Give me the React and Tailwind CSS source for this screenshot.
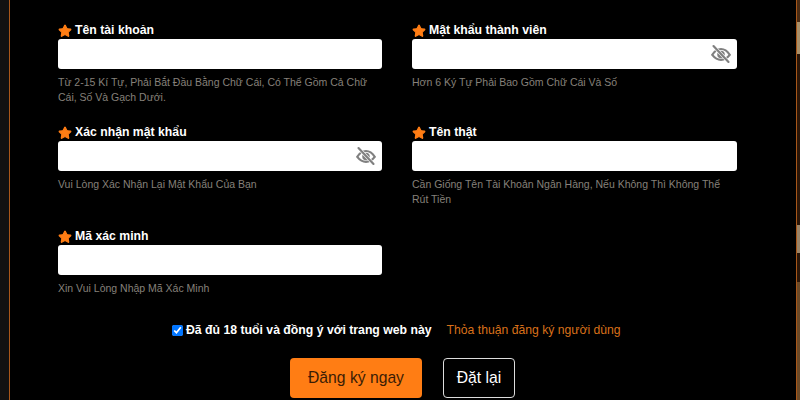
import { Star } from 'lucide-react';

function EyeOff() {
  return (
    <svg viewBox="0 0 24 24" className="w-[20px] h-[20px] text-[#808080]" fill="none" stroke="currentColor">
      <path d="M1.500 13C5 7.500 8.500 6 12 6s7 1.500 10.500 7c-3.500 4.500-7 6-10.500 6s-7-1.500-10.500-6z" strokeWidth="2.600" />
      <circle cx="12" cy="12.500" r="4.500" fill="currentColor" stroke="none" />
      <path d="M3 2.500l18 19" stroke="#fff" strokeWidth="4" />
      <path d="M3 2.500l18 19" strokeWidth="2.600" strokeLinecap="round" />
    </svg>
  );
}

function Field({ label, hint, eye }) {
  return (
    <div className="w-full">
      <div className="flex items-center h-[17px] text-[12.250px] font-bold text-white leading-[17px]">
        <Star className="w-[14px] h-[14px] mr-[3px] text-[#ff7d14] fill-[#ff7d14]" strokeWidth={2} />
        <span>{label}</span>
      </div>
      <div className="h-[30px] bg-white rounded-[3px] flex items-center justify-end pr-[6px]">
        {eye && <EyeOff />}
      </div>
      <p className="mt-[5.500px] text-[10.500px] leading-[15px] text-[#86807a]">{hint}</p>
    </div>
  );
}

export default function App() {
  return (
    <div className="w-[800px] h-[400px] overflow-hidden bg-[#111] flex pl-[9px] font-['Liberation_Sans',Arial,sans-serif]">
      <div className="w-[788px] h-full shrink-0 bg-black border-x border-[#a8571a] pt-[22px] pl-[48px]">
        <div className="grid grid-cols-[324px_325px] gap-x-[30px] grid-rows-[102px_104px_103px]">
          <Field label="Tên tài khoản" hint="Từ 2-15 Kí Tự, Phải Bắt Đầu Bằng Chữ Cái, Có Thể Gồm Cả Chữ Cái, Số Và Gạch Dưới." />
          <Field label="Mật khẩu thành viên" hint="Hơn 6 Ký Tự Phải Bao Gồm Chữ Cái Và Số" eye />
          <Field label="Xác nhận mật khẩu" hint="Vui Lòng Xác Nhận Lại Mật Khẩu Của Bạn" eye />
          <Field label="Tên thật" hint="Cần Giống Tên Tài Khoản Ngân Hàng, Nếu Không Thì Không Thể Rút Tiền" />
          <Field label="Mã xác minh" hint="Xin Vui Lòng Nhập Mã Xác Minh" />
        </div>
        <div className="flex items-center mt-[-9px] ml-[114px] h-[16px]">
          <input type="checkbox" defaultChecked className="w-[11px] h-[11px] mr-[3px] accent-[#0075ff]" />
          <span className="text-[12.250px] font-bold text-white">Đã đủ 18 tuổi và đồng ý với trang web này</span>
          <span className="ml-[15px] text-[12.200px] text-[#d9701a]">Thỏa thuận đăng ký người dùng</span>
        </div>
        <div className="flex mt-[20px] ml-[232px] gap-[21px]">
          <button className="w-[132px] h-[40px] rounded-[4px] bg-[#ff7d14] text-[15.700px] text-[#3a1c05]">Đăng ký ngay</button>
          <button className="w-[72px] h-[40px] rounded-[4px] border border-[#ddd] text-[15.700px] text-white">Đặt lại</button>
        </div>
      </div>
      <div className="flex-1 flex flex-col">
        <div className="h-[22px] bg-[#4a2c14]" />
        <div className="h-[32px] bg-[#a8906a]" />
        <div className="h-[171px] bg-[#2a1608]" />
        <div className="h-[28px] bg-[#9a8468]" />
        <div className="h-[29px] bg-[#2a1608]" />
        <div className="flex-1 bg-[#6b4a28]" />
      </div>
    </div>
  );
}
